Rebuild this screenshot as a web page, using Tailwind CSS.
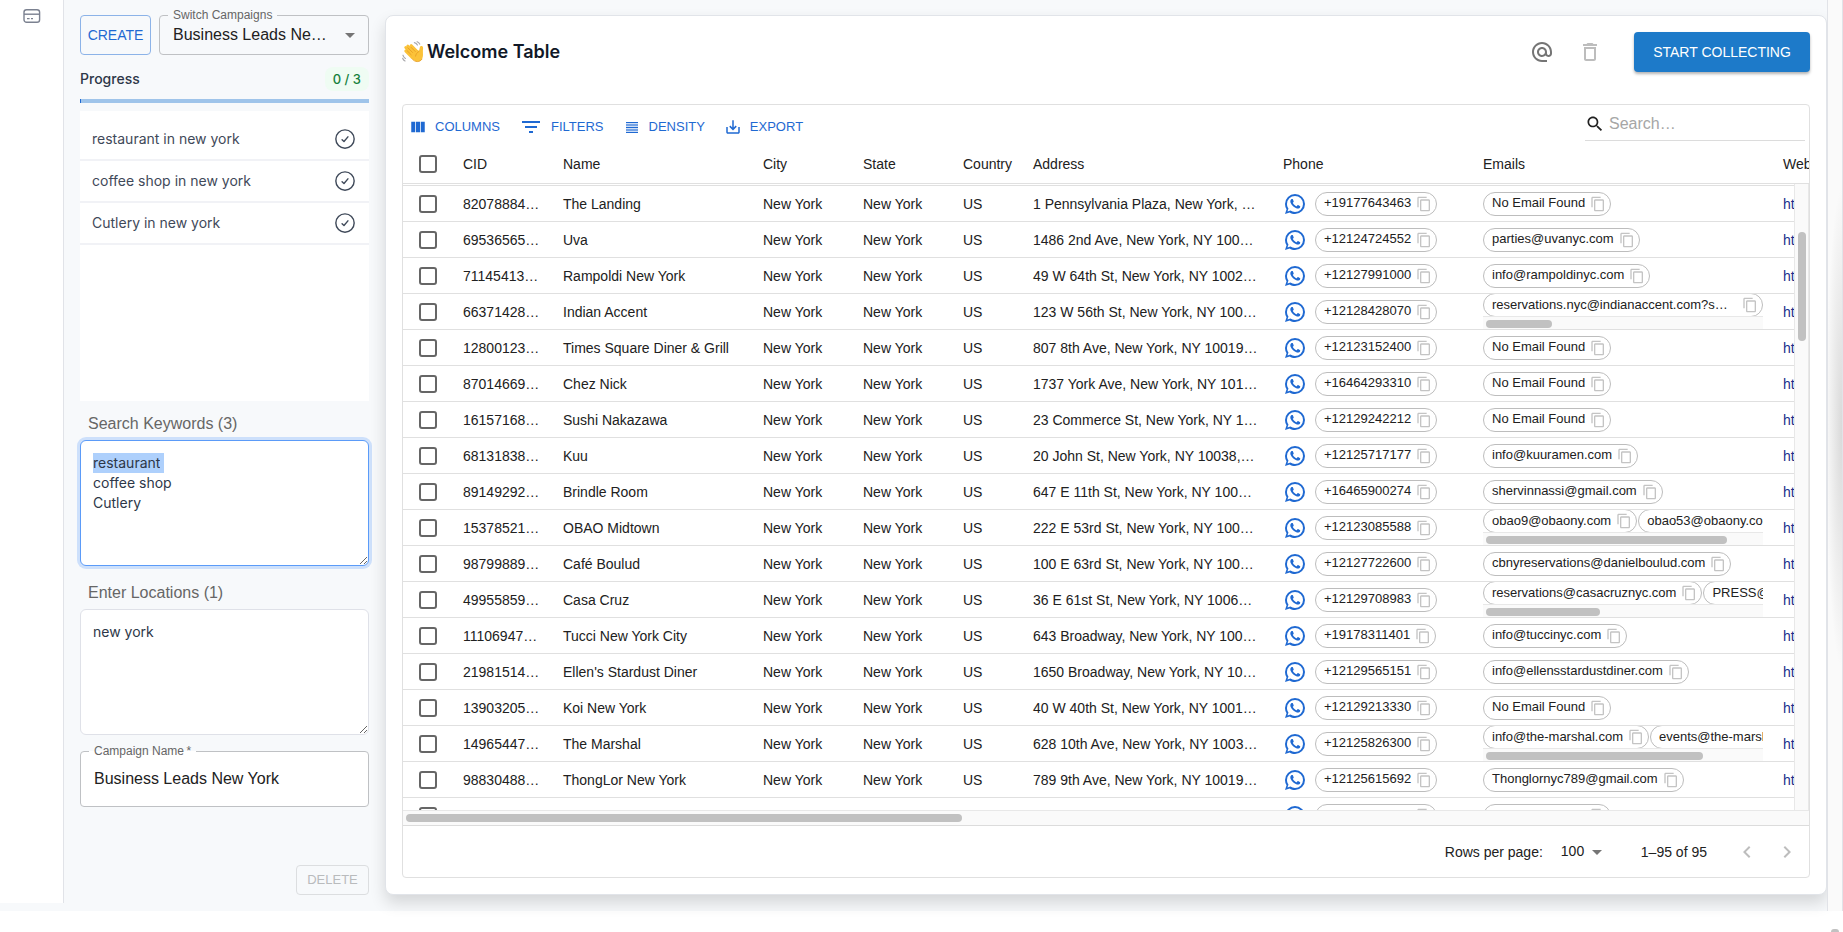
<!DOCTYPE html>
<html lang="en">
<head>
    <meta charset="UTF-8">
    <meta name="viewport" content="width=device-width, initial-scale=1.0">
    <title>Business Leads New York</title>
    <script src="https://cdn.jsdelivr.net/npm/@tailwindcss/browser@4"></script>
</head>
<body class="relative flex h-screen overflow-hidden bg-white pb-[21px] font-['Liberation_Sans',Arial,sans-serif] text-sm text-[#212121]">
    <!-- Shared icons -->
    <svg class="hidden">
        <symbol id="i-check" viewBox="0 0 24 24" fill="none" stroke="currentColor" stroke-width="1.7" stroke-linecap="round" stroke-linejoin="round">
            <circle cx="12" cy="12" r="11" />
            <path d="M8.5 12.8l2.3 2.2 4.7-5.6" />
        </symbol>
        <symbol id="i-copy" viewBox="0 0 24 24">
            <path d="M16 1H4c-1.1 0-2 .9-2 2v14h2V3h12V1zm3 4H8c-1.1 0-2 .9-2 2v14c0 1.1.9 2 2 2h11c1.1 0 2-.9 2-2V7c0-1.1-.9-2-2-2zm0 16H8V7h11v14z" />
        </symbol>
        <symbol id="i-whatsapp" viewBox="0 0 24 24">
            <path d="M16.75 13.96c.25.13.41.2.46.3.06.11.04.61-.21 1.18-.2.56-1.24 1.1-1.7 1.12-.46.02-.47.36-2.96-.73-2.49-1.09-3.99-3.75-4.11-3.92-.12-.17-.96-1.38-.92-2.61.05-1.22.69-1.8.95-2.04.24-.26.51-.29.68-.26h.47c.15 0 .36-.06.55.45l.69 1.87c.06.13.1.28.01.44l-.27.41-.39.42c-.12.12-.26.25-.12.5.12.26.62 1.09 1.32 1.78.91.88 1.71 1.17 1.95 1.3.24.14.39.12.54-.04l.81-.94c.19-.25.35-.19.58-.11l1.67.88M12 2a10 10 0 0 1 10 10 10 10 0 0 1-10 10c-1.97 0-3.8-.57-5.35-1.55L2 22l1.55-4.65A9.969 9.969 0 0 1 2 12 10 10 0 0 1 12 2m0 2a8 8 0 0 0-8 8c0 1.72.54 3.31 1.46 4.61L4.5 19.5l2.89-.96A7.95 7.95 0 0 0 12 20a8 8 0 0 0 8-8 8 8 0 0 0-8-8z" />
        </symbol>
    </svg>

    <div class="flex h-full w-full bg-[#f7f9fb]">
        <!-- Icon rail -->
        <nav class="mb-2 w-16 shrink-0 border-r border-[#e1e3e8] bg-white pt-2 pl-[23px]">
            <a href="#" aria-label="Billing" class="block text-[#7b8190]">
                <svg class="h-4 w-[18px]" viewBox="0 0 18 16" fill="none" stroke="currentColor" stroke-width="1.4">
                    <rect x="1" y="1.7" width="15.6" height="12.6" rx="2.6" />
                    <path d="M1 6.2h15.6" />
                    <path d="M4 10.6h2.6M8 10.6h2" stroke-width="1.3" />
                </svg>
            </a>
        </nav>

        <!-- Campaign panel -->
        <aside class="flex w-[321px] shrink-0 flex-col px-4 pt-[15px] pb-4">
            <div class="flex gap-2">
                <button class="h-10 w-[71px] shrink-0 rounded border border-[#8cb3e8] text-[#1f69d2]">CREATE</button>
                <div class="relative min-w-0 flex-1">
                    <label for="campaign" class="absolute -top-2 left-[9px] bg-[#f7f9fb] px-[5px] text-xs text-[#666]">Switch Campaigns</label>
                    <select id="campaign" class="h-10 w-full appearance-none truncate rounded border border-[#bfc1c4] pr-8 pl-[13px] text-base text-[#212121]">
                        <option>Business Leads New York</option>
                    </select>
                    <svg class="pointer-events-none absolute top-2 right-[7px] size-6 text-[#757575]" viewBox="0 0 24 24" fill="currentColor"><path d="M7 10l5 5 5-5z" /></svg>
                </div>
            </div>

            <div class="mt-3 flex items-center justify-between font-[Inter,sans-serif]">
                <h2 class="font-medium text-[#2d3748]">Progress</h2>
                <span class="flex h-6 items-center rounded-lg bg-[#effcf3] px-2 text-[13px] font-medium text-[#15803d]">0 / 3</span>
            </div>
            <div class="mt-2 h-1 border-l border-[#1f69d2] bg-[#9fc4ea]"></div>
            <ul id="progress" class="mt-2 h-[290px] bg-white pt-2 font-[Inter,sans-serif] text-[#3f4959]"></ul>

            <label for="keywords" class="mt-[11px] ml-2 text-base text-[#666]">Search Keywords (3)</label>
            <textarea id="keywords" class="mt-1 h-[126px] rounded-md border border-[#5b9bf8] bg-white px-3 py-3 font-[Inter,sans-serif] leading-5 text-[#2d3748] ring-3 ring-[#cde0fb] outline-none selection:bg-[#aed0fc] selection:text-[#2d3748]">restaurant
coffee shop
Cutlery</textarea>

            <label for="locations" class="mt-[15px] ml-2 text-base text-[#666]">Enter Locations (1)</label>
            <textarea id="locations" class="mt-1 h-[126px] rounded-md border border-[#dfe1e8] bg-white px-3 py-3 font-[Inter,sans-serif] leading-5 text-[#2d3748]">new york</textarea>

            <div class="relative mt-4">
                <label for="name" class="absolute -top-2 left-[9px] bg-linear-to-b from-[#f7f9fb] from-50% to-white to-50% px-[5px] text-xs text-[#666]">Campaign Name&thinsp;*</label>
                <input id="name" type="text" value="Business Leads New York" class="h-14 w-full rounded border border-[#bfc1c4] bg-white px-[13px] text-base text-[#212121]">
            </div>

            <button disabled class="mt-auto h-[30px] w-[73px] self-end rounded border border-[#dcdee0] text-[13px] text-[#b9bbbd]">DELETE</button>
        </aside>

        <!-- Results card -->
        <main class="mt-[15px] mb-4 flex min-w-0 flex-1 flex-col rounded-lg border border-[#e1e4e9] bg-white p-4 shadow-[0_8px_16px_rgba(0,0,0,0.14)]">
            <header class="mb-8 flex h-10 shrink-0 items-center">
                <svg class="mr-[3px] size-[22px]" viewBox="0 0 24 24" fill="none" stroke-linecap="round">
                    <path d="M13.500 1.800c1.500.3 2.700 1.200 3.300 2.600M16.500.8c1.300.5 2.200 1.300 2.800 2.600M1 15.500c.4 1.600 1.300 2.800 2.700 3.500M.8 19c.5 1.300 1.300 2.200 2.500 2.800" stroke="#a9a9ad" stroke-width="1.300" />
                    <path d="M4 11l7 7M4 7l9 9M6.300 5.300L15 14M10 5l7 7" stroke="#fbc239" stroke-width="3" />
                    <path d="M9.800 17.800c3.200 5.400 9.200 6 12 1.700 1.700-2.700.9-5.500 1-8.500 0-1.600.4-3 .1-4.300-.5-1.900-3-1.700-3.400.1l-.9 3.700-2.600-1-6.200 8.300z" fill="#fbc239" />
                    <path d="M5.500 10.500l4.500 4.500M6.500 7.500l5 5M10 7l4.500 4.500M14.800 16.500c.3-2.200 1.600-4 3.800-5.200M11 19.500c3 4 8.500 4 10.800.3" stroke="#e59b22" stroke-width=".9" />
                </svg>
                <h1 class="flex-1 font-[Inter,sans-serif] text-lg font-semibold text-[#111827]">Welcome Table</h1>
                <div class="mr-6 flex gap-2">
                    <button aria-label="Emails" class="flex size-10 items-center justify-center text-[#757575]">
                        <svg class="size-6" viewBox="0 0 24 24" fill="currentColor"><path d="M12 1.950c-5.520 0-10 4.480-10 10s4.480 10 10 10h5v-2h-5c-4.340 0-8-3.660-8-8s3.660-8 8-8 8 3.660 8 8v1.430c0 .79-.71 1.570-1.500 1.570s-1.500-.78-1.500-1.570v-1.430c0-2.760-2.240-5-5-5s-5 2.240-5 5 2.240 5 5 5c1.380 0 2.640-.56 3.540-1.470.65.89 1.770 1.470 2.960 1.470 1.970 0 3.500-1.600 3.500-3.570v-1.430c0-5.520-4.480-10-10-10zm0 13c-1.660 0-3-1.340-3-3s1.340-3 3-3 3 1.340 3 3-1.340 3-3 3z" /></svg>
                    </button>
                    <button aria-label="Delete" class="flex size-10 items-center justify-center text-[#bdbdbd]">
                        <svg class="size-6" viewBox="0 0 24 24" fill="currentColor"><path d="M6 19c0 1.100.9 2 2 2h8c1.100 0 2-.9 2-2V7H6v12zM8 9h8v10H8V9zm7.500-5l-1-1h-5l-1 1H5v2h14V4z" /></svg>
                    </button>
                </div>
                <button class="h-10 w-44 rounded bg-[#1d7ac9] text-sm text-white shadow-[0_2px_3px_rgba(0,0,0,0.3)]">START COLLECTING</button>
            </header>

            <section class="flex min-h-0 flex-1 flex-col rounded border border-[#e0e0e0]">
                <!-- Toolbar -->
                <div class="flex h-10 shrink-0 items-start justify-between pr-1 pl-px">
                    <div class="mt-[7px] flex h-[30px] gap-[9px] text-[13px] text-[#1f69d2]">
                        <button class="flex items-center gap-2 px-[5px]">
                            <svg class="size-[18px]" viewBox="0 0 24 24" fill="currentColor"><path d="M14.670 5v14H9.330V5h5.340zm1 14H21V5h-5.330v14zm-7.340 0V5H3v14h5.330z" /></svg>
                            COLUMNS
                        </button>
                        <button class="flex items-center gap-2 px-[5px]">
                            <svg class="size-6" viewBox="0 0 24 24" fill="currentColor"><path d="M10 18h4v-2h-4v2zM3 6v2h18V6H3zm3 7h12v-2H6v2z" /></svg>
                            FILTERS
                        </button>
                        <button class="flex items-center gap-2 px-[5px]">
                            <svg class="size-[18px]" viewBox="0 0 18 18">
                                <rect x="3" y="4" width="12" height="11" fill="#cfdff6" />
                                <path d="M3 4h12v1H3zM3 6.500h12v1H3zM3 9h12v1H3zM3 11.500h12v1H3zM3 14h12v1H3z" fill="currentColor" />
                            </svg>
                            DENSITY
                        </button>
                        <button class="flex items-center gap-2 px-[5px]">
                            <svg class="size-[18px]" viewBox="0 0 24 24" fill="currentColor"><path d="M19 12v7H5v-7H3v7c0 1.100.9 2 2 2h14c1.100 0 2-.9 2-2v-7h-2zm-6 .670l2.590-2.580L17 11.500l-5 5-5-5 1.410-1.410L11 12.670V3h2z" /></svg>
                            EXPORT
                        </button>
                    </div>
                    <label class="flex h-9 w-[220px] items-center gap-1 border-b border-[#dcdcdc] pt-[2px]">
                        <svg class="size-5 shrink-0" viewBox="0 0 24 24" fill="currentColor"><path d="M15.500 14h-.79l-.28-.27C15.410 12.590 16 11.110 16 9.500 16 5.910 13.090 3 9.500 3S3 5.910 3 9.500 5.910 16 9.500 16c1.610 0 3.090-.59 4.230-1.570l.27.28v.79l5 4.990L20.490 19l-4.990-5zm-6 0C7.010 14 5 11.990 5 9.500S7.010 5 9.500 5 14 7.010 14 9.500 11.990 14 9.500 14z" /></svg>
                        <input type="search" placeholder="Search…" aria-label="Search" class="min-w-0 flex-1 text-base outline-none placeholder:text-[#a6a6a6]">
                    </label>
                </div>

                <!-- Rows -->
                <div class="relative min-h-0 flex-1 overflow-hidden">
                    <table class="w-[1470px] table-fixed border-separate border-spacing-0 text-left whitespace-nowrap">
                        <colgroup>
                            <col class="w-[50px]"><col class="w-[100px]"><col class="w-[200px]"><col class="w-[100px]"><col class="w-[100px]"><col class="w-[70px]"><col class="w-[250px]"><col class="w-[200px]"><col class="w-[300px]"><col class="w-[100px]">
                        </colgroup>
                        <thead>
                            <tr class="h-[39px] *:border-b *:border-[#e0e0e0] *:px-[10px] *:py-0 *:font-normal">
                                <th class="text-center"><input type="checkbox" aria-label="Select all rows" class="block size-[18px] mx-auto appearance-none rounded-[3px] border-2 border-[#666]"></th>
                                <th>CID</th>
                                <th>Name</th>
                                <th>City</th>
                                <th>State</th>
                                <th>Country</th>
                                <th>Address</th>
                                <th>Phone</th>
                                <th>Emails</th>
                                <th>Website</th>
                            </tr>
                        </thead>
                        <tbody id="rows">
                            <!-- Bottom edge of the row scrolled out of view -->
                            <tr class="h-[2px]"><td colspan="10" class="border-b border-[#e0e0e0] p-0"></td></tr>
                        </tbody>
                    </table>
                    <div class="absolute top-[39px] right-0 bottom-0 w-[15px] border-x border-[#e8e8e8] bg-[#fafafa]">
                        <div class="mx-auto mt-12 h-[109px] w-2 rounded-full bg-[#c1c1c1]"></div>
                    </div>
                </div>
                <div class="h-[15px] shrink-0 border-t border-[#e8e8e8] bg-[#fafafa] px-[3px] pt-[3px]">
                    <div class="h-2 w-[556px] rounded-full bg-[#c1c1c1]"></div>
                </div>

                <!-- Pagination -->
                <footer class="flex h-[52px] shrink-0 items-center justify-end border-t border-[#dcdcdc] pr-[2px]">
                    <label for="page-size">Rows per page:</label>
                    <div class="relative ml-[18px]">
                        <select id="page-size" class="w-12 appearance-none pb-px text-sm"><option>100</option></select>
                        <svg class="pointer-events-none absolute -top-px right-0 size-6 text-[#757575]" viewBox="0 0 24 24" fill="currentColor"><path d="M7 10l5 5 5-5z" /></svg>
                    </div>
                    <span class="ml-8">1–95 of 95</span>
                    <div class="ml-5 flex text-[#bdbdbd]">
                        <button aria-label="Previous page" class="p-2"><svg class="size-6" viewBox="0 0 24 24" fill="currentColor"><path d="M15.410 7.410L14 6l-6 6 6 6 1.410-1.410L10.830 12z" /></svg></button>
                        <button aria-label="Next page" class="p-2"><svg class="size-6" viewBox="0 0 24 24" fill="currentColor"><path d="M10 6L8.590 7.410 13.170 12l-4.580 4.590L10 18l6-6z" /></svg></button>
                    </div>
                </footer>
            </section>
        </main>

        <!-- Page scroll track -->
        <div class="w-4 shrink-0 border-x border-[#e1e3e8] bg-[#fafafa] bg-[radial-gradient(16px_240px_at_100%_47%,#d9d9d9,#fafafa)]"></div>
    </div>
    <div class="absolute right-1 bottom-0 h-[3px] w-2 rounded-t-full bg-[#c1c1c1]"></div>

    <script>
        const tasks = ['restaurant in new york', 'coffee shop in new york', 'Cutlery in new york'];

        // cid, name, address, phone, emails, width of the email scroll thumb
        const leads = [
            ['82078884…', 'The Landing', '1 Pennsylvania Plaza, New York, …', '+19177643463', ['No Email Found']],
            ['69536565…', 'Uva', '1486 2nd Ave, New York, NY 100…', '+12124724552', ['parties@uvanyc.com']],
            ['71145413…', 'Rampoldi New York', '49 W 64th St, New York, NY 1002…', '+12127991000', ['info@rampoldinyc.com']],
            ['66371428…', 'Indian Accent', '123 W 56th St, New York, NY 100…', '+12128428070', ['reservations.nyc@indianaccent.com?s…'], 66],
            ['12800123…', 'Times Square Diner &amp; Grill', '807 8th Ave, New York, NY 10019…', '+12123152400', ['No Email Found']],
            ['87014669…', 'Chez Nick', '1737 York Ave, New York, NY 101…', '+16464293310', ['No Email Found']],
            ['16157168…', 'Sushi Nakazawa', '23 Commerce St, New York, NY 1…', '+12129242212', ['No Email Found']],
            ['68131838…', 'Kuu', '20 John St, New York, NY 10038,…', '+12125717177', ['info@kuuramen.com']],
            ['89149292…', 'Brindle Room', '647 E 11th St, New York, NY 100…', '+16465900274', ['shervinnassi@gmail.com']],
            ['15378521…', 'OBAO Midtown', '222 E 53rd St, New York, NY 100…', '+12123085588', ['obao9@obaony.com', 'obao53@obaony.com'], 241],
            ['98799889…', 'Café Boulud', '100 E 63rd St, New York, NY 100…', '+12127722600', ['cbnyreservations@danielboulud.com']],
            ['49955859…', 'Casa Cruz', '36 E 61st St, New York, NY 1006…', '+12129708983', ['reservations@casacruznyc.com', 'PRESS@casacruznyc.com'], 114],
            ['11106947…', 'Tucci New York City', '643 Broadway, New York, NY 100…', '+19178311401', ['info@tuccinyc.com']],
            ['21981514…', 'Ellen\'s Stardust Diner', '1650 Broadway, New York, NY 10…', '+12129565151', ['info@ellensstardustdiner.com']],
            ['13903205…', 'Koi New York', '40 W 40th St, New York, NY 1001…', '+12129213330', ['No Email Found']],
            ['14965447…', 'The Marshal', '628 10th Ave, New York, NY 1003…', '+12125826300', ['info@the-marshal.com', 'events@the-marshal.com'], 217],
            ['98830488…', 'ThongLor New York', '789 9th Ave, New York, NY 10019…', '+12125615692', ['Thonglornyc789@gmail.com']],
            ['10482937…', 'Benoit', '60 W 55th St, New York, NY 1001…', '+19177322255', ['No Email Found']],
        ];

        const chip = (text, wide) => `
            <span class="flex h-6 shrink-0 items-center rounded-full border border-[#bdbdbd] pr-1 pl-2 text-[13px] ${wide ? 'w-full justify-between' : ''}">
                ${text}
                <button aria-label="Copy ${text}" class="ml-[5px] text-[#c4c4c4]"><svg class="size-4" fill="currentColor"><use href="#i-copy" /></svg></button>
            </span>`;

        const emailCell = (emails, thumb) => thumb ? `
            <div class="flex h-[35px] flex-col overflow-hidden">
                <div class="flex min-h-0 flex-1 items-center gap-px overflow-hidden">${emails.map(e => chip(e, emails.length === 1)).join('')}</div>
                <div class="h-[13px] border-t border-[#e8e8e8] bg-[#fafafa] px-[3px] pt-[3px]">
                    <div class="h-2 rounded-full bg-[#c1c1c1]" style="width: ${thumb}px"></div>
                </div>
            </div>` : `<div class="flex">${chip(emails[0])}</div>`;

        document.getElementById('progress').innerHTML = tasks.map(task => `
            <li class="flex h-[42px] items-center justify-between border-b-2 border-[#f1f2f6] pr-[14px] pl-3">
                ${task}
                <svg class="size-5"><use href="#i-check" /></svg>
            </li>`).join('');

        document.getElementById('rows').insertAdjacentHTML('beforeend', leads.map(([cid, name, address, phone, emails, thumb]) => `
            <tr class="h-9 *:h-9 *:border-b *:border-[#e0e0e0] *:px-[10px] *:py-0">
                <td><input type="checkbox" aria-label="Select ${name}" class="mx-auto block size-[18px] appearance-none rounded-[3px] border-2 border-[#666]"></td>
                <td>${cid}</td>
                <td>${name}</td>
                <td>New York</td>
                <td>New York</td>
                <td>US</td>
                <td>${address}</td>
                <td>
                    <div class="flex items-center gap-2">
                        <svg class="size-6 shrink-0 text-[#1f69d2]" fill="currentColor"><use href="#i-whatsapp" /></svg>
                        ${chip(phone)}
                    </div>
                </td>
                <td>${emailCell(emails, thumb)}</td>
                <td><a href="#" class="text-[#1a2f8c]">https://</a></td>
            </tr>`).join(''));

        // First keyword line starts out selected
        const keywords = document.getElementById('keywords');
        keywords.focus();
        keywords.setSelectionRange(0, 11);
    </script>
</body>
</html>
